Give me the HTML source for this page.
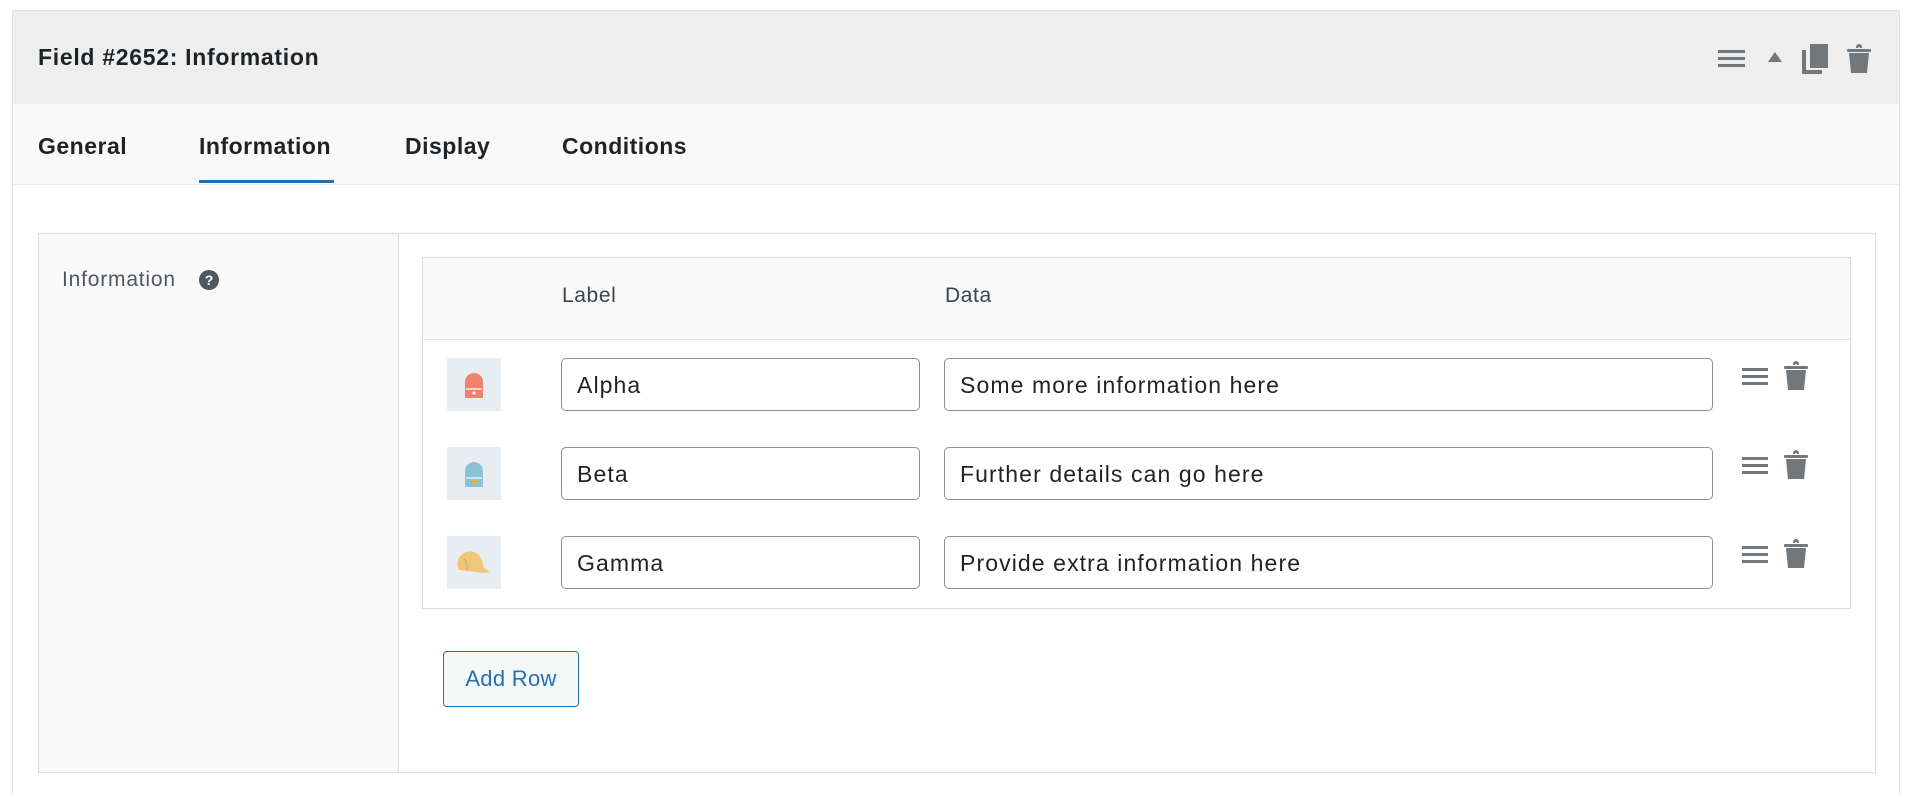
<!DOCTYPE html>
<html style="overflow:hidden;height:795px"><head><meta charset="utf-8"><style>
*{box-sizing:border-box;margin:0;padding:0}
body{width:1920px;height:795px;background:#fff;font-family:"Liberation Sans",Arial,sans-serif;position:relative;overflow:hidden;color:#1d2327}
.card{position:absolute;left:12px;top:10px;width:1888px;height:785px;border:1px solid #e2e2e2;border-bottom:none;background:#fff}
.hdr{position:absolute;left:0;top:0;right:0;height:93px;background:#eeeeee}
.title{position:absolute;left:25px;top:33px;font-size:23px;letter-spacing:0.7px;font-weight:bold;color:#1d2327}
.tabs{position:absolute;left:0;top:93px;right:0;height:81px;background:#f9f9f9;border-bottom:1px solid #ececec}
.tab{position:absolute;top:29px;font-size:23px;letter-spacing:0.5px;font-weight:bold;color:#1d2327}
.ul{position:absolute;left:186px;top:76px;width:135px;height:3px;background:#2271b1}
.box{position:absolute;left:38px;top:233px;width:1838px;height:540px;border:1px solid #dcdcde;background:#fff}
.lcol{position:absolute;left:0;top:0;width:360px;height:100%;background:#f9f9f9;border-right:1px solid #dcdcde}
.lbl{position:absolute;left:23px;top:34px;font-size:21px;letter-spacing:0.8px;color:#50575e}
.help{position:absolute;left:160px;top:36px;width:20px;height:20px;border-radius:50%;background:#50575e;color:#fff;font-size:14px;font-weight:bold;text-align:center;line-height:20px}
.rep{position:absolute;left:422px;top:257px;width:1429px;height:352px;border:1px solid #dcdcde;background:#fff}
.rhead{position:absolute;left:0;top:0;right:0;height:82px;background:#f9f9f9;border-bottom:1px solid #e2e2e2}
.rh{position:absolute;top:26px;font-size:21px;letter-spacing:0.6px;color:#3c434a}
.thumb{position:absolute;width:54px;height:53px;background:#e8edf1}
.inp{position:absolute;height:53px;border:1.5px solid #8c8f94;border-radius:5px;background:#fff;font-size:23px;letter-spacing:1.1px;color:#1d2327;padding-left:15px;line-height:52px}
.btn{position:absolute;left:443px;top:651px;width:136px;height:56px;border:1.5px solid #2271b1;border-radius:4px;background:#f6f7f7;color:#2271b1;font-size:22px;letter-spacing:0.3px;text-align:center;line-height:53px}
svg{position:absolute}
</style></head><body>
<div class="card">
 <div class="hdr"><div class="title">Field #2652: Information</div></div>
 <div class="tabs">
  <div class="tab" style="left:25px">General</div>
  <div class="tab" style="left:186px">Information</div>
  <div class="tab" style="left:392px">Display</div>
  <div class="tab" style="left:549px">Conditions</div>
  <div class="ul"></div>
 </div>
</div>
<svg style="left:1718px;top:48px" width="27" height="20" viewBox="0 0 27 20"><g fill="#72777c"><rect y="2" width="27" height="3"/><rect y="9" width="27" height="3"/><rect y="16" width="27" height="3"/></g></svg>
<svg style="left:1768px;top:52px" width="14" height="11" viewBox="0 0 14 11"><path d="M7 0L14 10H0Z" fill="#72777c"/></svg>
<svg style="left:1802px;top:44px" width="26" height="30" viewBox="0 0 26 30"><g fill="#72777c"><rect x="8" y="0" width="18" height="24"/><path d="M0 6h4v20h16v4H0z"/></g></svg>
<svg style="left:1847px;top:44px" width="24" height="29" viewBox="0 0 24 29"><g fill="#72777c"><path d="M9 3a3 3 0 0 1 6 0v1h-2a1 1 0 0 0-2 0H9z"/><rect x="0" y="5" width="24" height="3" rx="1"/><path d="M2 9h20l-2 20H4z"/></g></svg>

<div class="box"><div class="lcol"><div class="lbl">Information</div><div class="help">?</div></div></div>
<div class="rep"><div class="rhead"><div class="rh" style="left:139px">Label</div><div class="rh" style="left:522px">Data</div></div></div>

<div class="thumb" style="left:447px;top:358px"></div>
<svg style="left:462px;top:370px" width="24" height="30" viewBox="0 0 24 30"><path d="M3 28V12a9 9 0 0 1 18 0v16z" fill="#f0826e"/><rect x="4" y="18" width="16" height="2" fill="#fbd0c8"/><circle cx="12" cy="23" r="1.5" fill="#fff"/></svg>
<div class="thumb" style="left:447px;top:447px"></div>
<svg style="left:462px;top:459px" width="24" height="30" viewBox="0 0 24 30"><path d="M3 28V12a9 9 0 0 1 18 0v16z" fill="#8cc2d6"/><rect x="4" y="18" width="16" height="2" fill="#cde6ef"/><rect x="9" y="21" width="6" height="4" fill="#d8b34a"/></svg>
<div class="thumb" style="left:447px;top:536px"></div>
<svg style="left:456px;top:550px" width="36" height="26" viewBox="0 0 36 26"><path d="M3 20a12 12 0 0 1 22-12l3 10 6 4-6 1z" fill="#efc77a"/><path d="M8 8q4 6 3 13" stroke="#d6a84f" fill="none"/></svg>

<div class="inp" style="left:561px;top:358px;width:359px">Alpha</div>
<div class="inp" style="left:944px;top:358px;width:769px">Some more information here</div>
<div class="inp" style="left:561px;top:447px;width:359px">Beta</div>
<div class="inp" style="left:944px;top:447px;width:769px">Further details can go here</div>
<div class="inp" style="left:561px;top:536px;width:359px">Gamma</div>
<div class="inp" style="left:944px;top:536px;width:769px">Provide extra information here</div>

<svg style="left:1742px;top:366px" width="26" height="20" viewBox="0 0 26 20"><g fill="#72777c"><rect y="2" width="26" height="3"/><rect y="9" width="26" height="3"/><rect y="16" width="26" height="3"/></g></svg>
<svg style="left:1784px;top:361px" width="24" height="30" viewBox="0 0 24 30"><g fill="#72777c"><path d="M9 3a3 3 0 0 1 6 0v1h-2a1 1 0 0 0-2 0H9z"/><rect x="0" y="5" width="24" height="3" rx="1"/><path d="M2 9h20l-2 20H4z"/></g></svg>
<svg style="left:1742px;top:455px" width="26" height="20" viewBox="0 0 26 20"><g fill="#72777c"><rect y="2" width="26" height="3"/><rect y="9" width="26" height="3"/><rect y="16" width="26" height="3"/></g></svg>
<svg style="left:1784px;top:450px" width="24" height="30" viewBox="0 0 24 30"><g fill="#72777c"><path d="M9 3a3 3 0 0 1 6 0v1h-2a1 1 0 0 0-2 0H9z"/><rect x="0" y="5" width="24" height="3" rx="1"/><path d="M2 9h20l-2 20H4z"/></g></svg>
<svg style="left:1742px;top:544px" width="26" height="20" viewBox="0 0 26 20"><g fill="#72777c"><rect y="2" width="26" height="3"/><rect y="9" width="26" height="3"/><rect y="16" width="26" height="3"/></g></svg>
<svg style="left:1784px;top:539px" width="24" height="30" viewBox="0 0 24 30"><g fill="#72777c"><path d="M9 3a3 3 0 0 1 6 0v1h-2a1 1 0 0 0-2 0H9z"/><rect x="0" y="5" width="24" height="3" rx="1"/><path d="M2 9h20l-2 20H4z"/></g></svg>

<div class="btn">Add Row</div>
</body></html>
